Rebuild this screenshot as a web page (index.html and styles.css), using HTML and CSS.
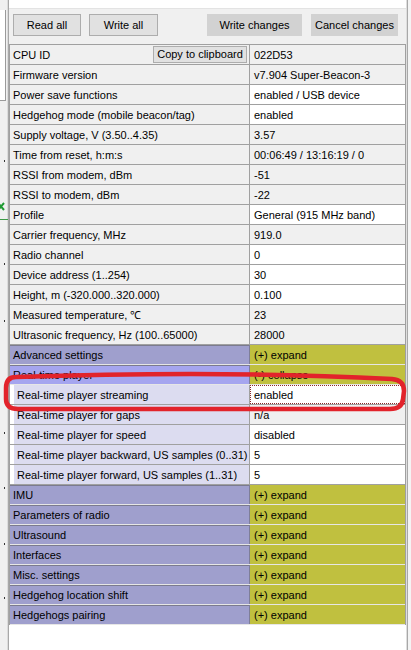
FILE: index.html
```html
<!DOCTYPE html>
<html lang="en">
<head>
  <meta charset="UTF-8">
  <title>Beacon settings</title>
  <link rel="stylesheet" href="styles.css">
</head>
<body>
<div class="window">

  <!-- strip of the neighbour panel -->
  <div class="side">
    <div class="side-box"></div>
    <span class="dot d1"></span>
    <svg class="mark-x" width="7" height="9" viewBox="0 0 7 9">
      <path d="M0 1 L6 8 M6 1 L0 8" stroke="#1e9a32" stroke-width="2" fill="none"/>
    </svg>
    <span class="green-line"></span>
    <span class="dot d2"></span>
    <span class="dot d3"></span>
    <span class="dot d4"></span>
    <span class="dot d5"></span>
    <span class="dot d6"></span>
    <span class="dot d7"></span>
  </div>

  <div class="main">
    <div class="toolbar">
      <button class="btn w-read">Read all</button>
      <button class="btn w-write">Write all</button>
      <button class="btn flat w-changes">Write changes</button>
      <button class="btn flat w-cancel">Cancel changes</button>
    </div>

    <div class="grid">
      <div class="row"><div class="label">CPU ID<button class="copy">Copy to clipboard</button></div><div class="value ro">022D53</div></div>
      <div class="row"><div class="label">Firmware version</div><div class="value ro">v7.904 Super-Beacon-3</div></div>
      <div class="row"><div class="label">Power save functions</div><div class="value">enabled / USB device</div></div>
      <div class="row"><div class="label">Hedgehog mode (mobile beacon/tag)</div><div class="value">enabled</div></div>
      <div class="row"><div class="label">Supply voltage, V (3.50..4.35)</div><div class="value ro">3.57</div></div>
      <div class="row"><div class="label">Time from reset, h:m:s</div><div class="value ro">00:06:49 / 13:16:19 / 0</div></div>
      <div class="row"><div class="label">RSSI from modem, dBm</div><div class="value ro">-51</div></div>
      <div class="row"><div class="label">RSSI to modem, dBm</div><div class="value ro">-22</div></div>
      <div class="row"><div class="label">Profile</div><div class="value">General (915 MHz band)</div></div>
      <div class="row"><div class="label">Carrier frequency, MHz</div><div class="value ro">919.0</div></div>
      <div class="row"><div class="label">Radio channel</div><div class="value">0</div></div>
      <div class="row"><div class="label">Device address (1..254)</div><div class="value">30</div></div>
      <div class="row"><div class="label">Height, m (-320.000..320.000)</div><div class="value">0.100</div></div>
      <div class="row"><div class="label">Measured temperature, &#8451;</div><div class="value ro">23</div></div>
      <div class="row"><div class="label">Ultrasonic frequency, Hz (100..65000)</div><div class="value ro">28000</div></div>

      <div class="row section"><div class="label">Advanced settings</div><div class="value">(+) expand</div></div>
      <div class="row section open"><div class="label">Real-time player</div><div class="value">(-) collapse</div></div>
      <div class="row sub"><div class="label">Real-time player streaming</div><div class="value selected">enabled</div></div>
      <div class="row sub"><div class="label">Real-time player for gaps</div><div class="value ro">n/a</div></div>
      <div class="row sub"><div class="label">Real-time player for speed</div><div class="value">disabled</div></div>
      <div class="row sub"><div class="label">Real-time player backward, US samples (0..31)</div><div class="value">5</div></div>
      <div class="row sub"><div class="label">Real-time player forward, US samples (1..31)</div><div class="value">5</div></div>

      <div class="row section"><div class="label">IMU</div><div class="value">(+) expand</div></div>
      <div class="row section"><div class="label">Parameters of radio</div><div class="value">(+) expand</div></div>
      <div class="row section"><div class="label">Ultrasound</div><div class="value">(+) expand</div></div>
      <div class="row section"><div class="label">Interfaces</div><div class="value">(+) expand</div></div>
      <div class="row section"><div class="label">Misc. settings</div><div class="value">(+) expand</div></div>
      <div class="row section"><div class="label">Hedgehog location shift</div><div class="value">(+) expand</div></div>
      <div class="row section"><div class="label">Hedgehogs pairing</div><div class="value">(+) expand</div></div>
    </div>
  </div>

  <div class="edge"></div>

  <!-- red marker drawn over the streaming row -->
  <svg class="marker" width="411" height="650" viewBox="0 0 411 650">
    <path d="M16 377 C 110 374, 260 372, 392 379 Q 404 380 404 391 L 403 399 Q 402 409 390 409 L 18 409 Q 6 409 6 399 L 6 388 Q 6 377 16 377 Z"
          fill="none" stroke="#e2232b" stroke-width="4.5" stroke-linejoin="round"/>
  </svg>
</div>
</body>
</html>
```

FILE: styles.css
```css
body {
  margin: 0;
  font-family: 'Liberation Sans', Arial, sans-serif;
  font-size: 11px;
  color: #000;
  background-color: #fff;
}

.window {
  position: relative;
  display: flex;
  height: 650px;
  overflow: hidden;
}

/* left strip */
.side {
  width: 9px;
  box-sizing: border-box;
  background-color: #f0f0f0;
  border-right: 1px solid #a8a8a8;
  box-shadow: inset -1px 0 0 #dcdcdc;
  display: flex;
  flex-direction: column;
  align-items: flex-start;
  padding-top: 10px;
}

.side-box {
  width: 5px;
  height: 90px;
  border-right: 1px solid #9a9a9a;
  border-bottom: 1px solid #9a9a9a;
  background-color: #fff;
}

.dot {
  width: 1px;
  height: 2px;
  margin-left: 4px;
  background-color: #333;
}

.d1 { margin-top: 59px; }
.d2 { margin-top: 43px; }
.d3 { margin-top: 55px; }
.d4 { margin-top: 110px; }
.d5 { margin-top: 53px; }
.d6 { margin-top: 54px; }
.d7 { margin-top: 52px; }

.mark-x {
  margin-top: 40px;
  margin-left: -2px;
}

.green-line {
  width: 8px;
  height: 1px;
  margin-top: 8px;
  background-color: #3c9a46;
}

/* main panel */
.main {
  width: 398px;
  display: flex;
  flex-direction: column;
  background-color: #fff;
}

.toolbar {
  margin-top: 8px;
  height: 36px;
  box-sizing: border-box;
  background-color: #f0f0f0;
  border-top: 1px solid #e3e3e3;
  display: flex;
  align-items: flex-start;
  padding: 5px 8px 0 4px;
}

.btn {
  height: 22px;
  padding: 0;
  font-family: inherit;
  font-size: 11px;
  color: #000;
  background-color: #e1e1e1;
  border: 1px solid #adadad;
}

.w-read { width: 68px; }
.w-write { width: 69px; margin-left: 8px; }
.w-changes { width: 95px; margin-left: auto; }
.w-cancel { width: 87px; margin-left: 9px; }

.btn.flat {
  background-color: #d2d2d2;
  border-color: #d2d2d2;
}

.grid {
  border-top: 1px solid #a0a0a0;
  border-left: 1px solid #a0a0a0;
  border-right: 1px solid #a0a0a0;
}

.row {
  display: grid;
  grid-template-columns: 240px 1fr;
  height: 20px;
  box-sizing: border-box;
  border-bottom: 1px solid #a0a0a0;
  line-height: 21px;
  white-space: nowrap;
}

.label {
  display: flex;
  align-items: flex-start;
  padding-left: 3px;
  background-color: #f0f0f0;
  border-right: 1px solid #a0a0a0;
  overflow: hidden;
}

.value {
  padding-left: 4px;
  background-color: #fff;
  overflow: hidden;
}

.value.ro {
  background-color: #f0f0f0;
}

.copy {
  align-self: center;
  margin-left: auto;
  margin-right: 2px;
  height: 17px;
  width: 94px;
  padding: 0;
  font-family: inherit;
  font-size: 11px;
  line-height: 15px;
  background-color: #e1e1e1;
  border: 1px solid #adadad;
}

/* group headers */
.section {
  border-bottom-color: #e6e6e6;
}

.section .label {
  background-color: #9f9fcd;
  box-shadow: inset 0 1px 0 #7b7b8e;
  border-right-color: #7e7e98;
}

.section .value {
  background-color: #c0c03f;
}

.section.open .label {
  background-color: #a5a5ef;
}

/* rows inside an open group */
.sub .label {
  border-left: 4px solid #fff;
  background-color: #dcdcf0;
}

.value.selected {
  outline: 1px dotted #8a2a2a;
  outline-offset: -1px;
}

.edge {
  width: 4px;
  background-color: #f4f4f4;
  border-left: 1px solid #dedede;
  box-shadow: inset 1px 0 0 #a8a8a8;
}

.marker {
  position: absolute;
  left: 0;
  top: 0;
  pointer-events: none;
}
```
